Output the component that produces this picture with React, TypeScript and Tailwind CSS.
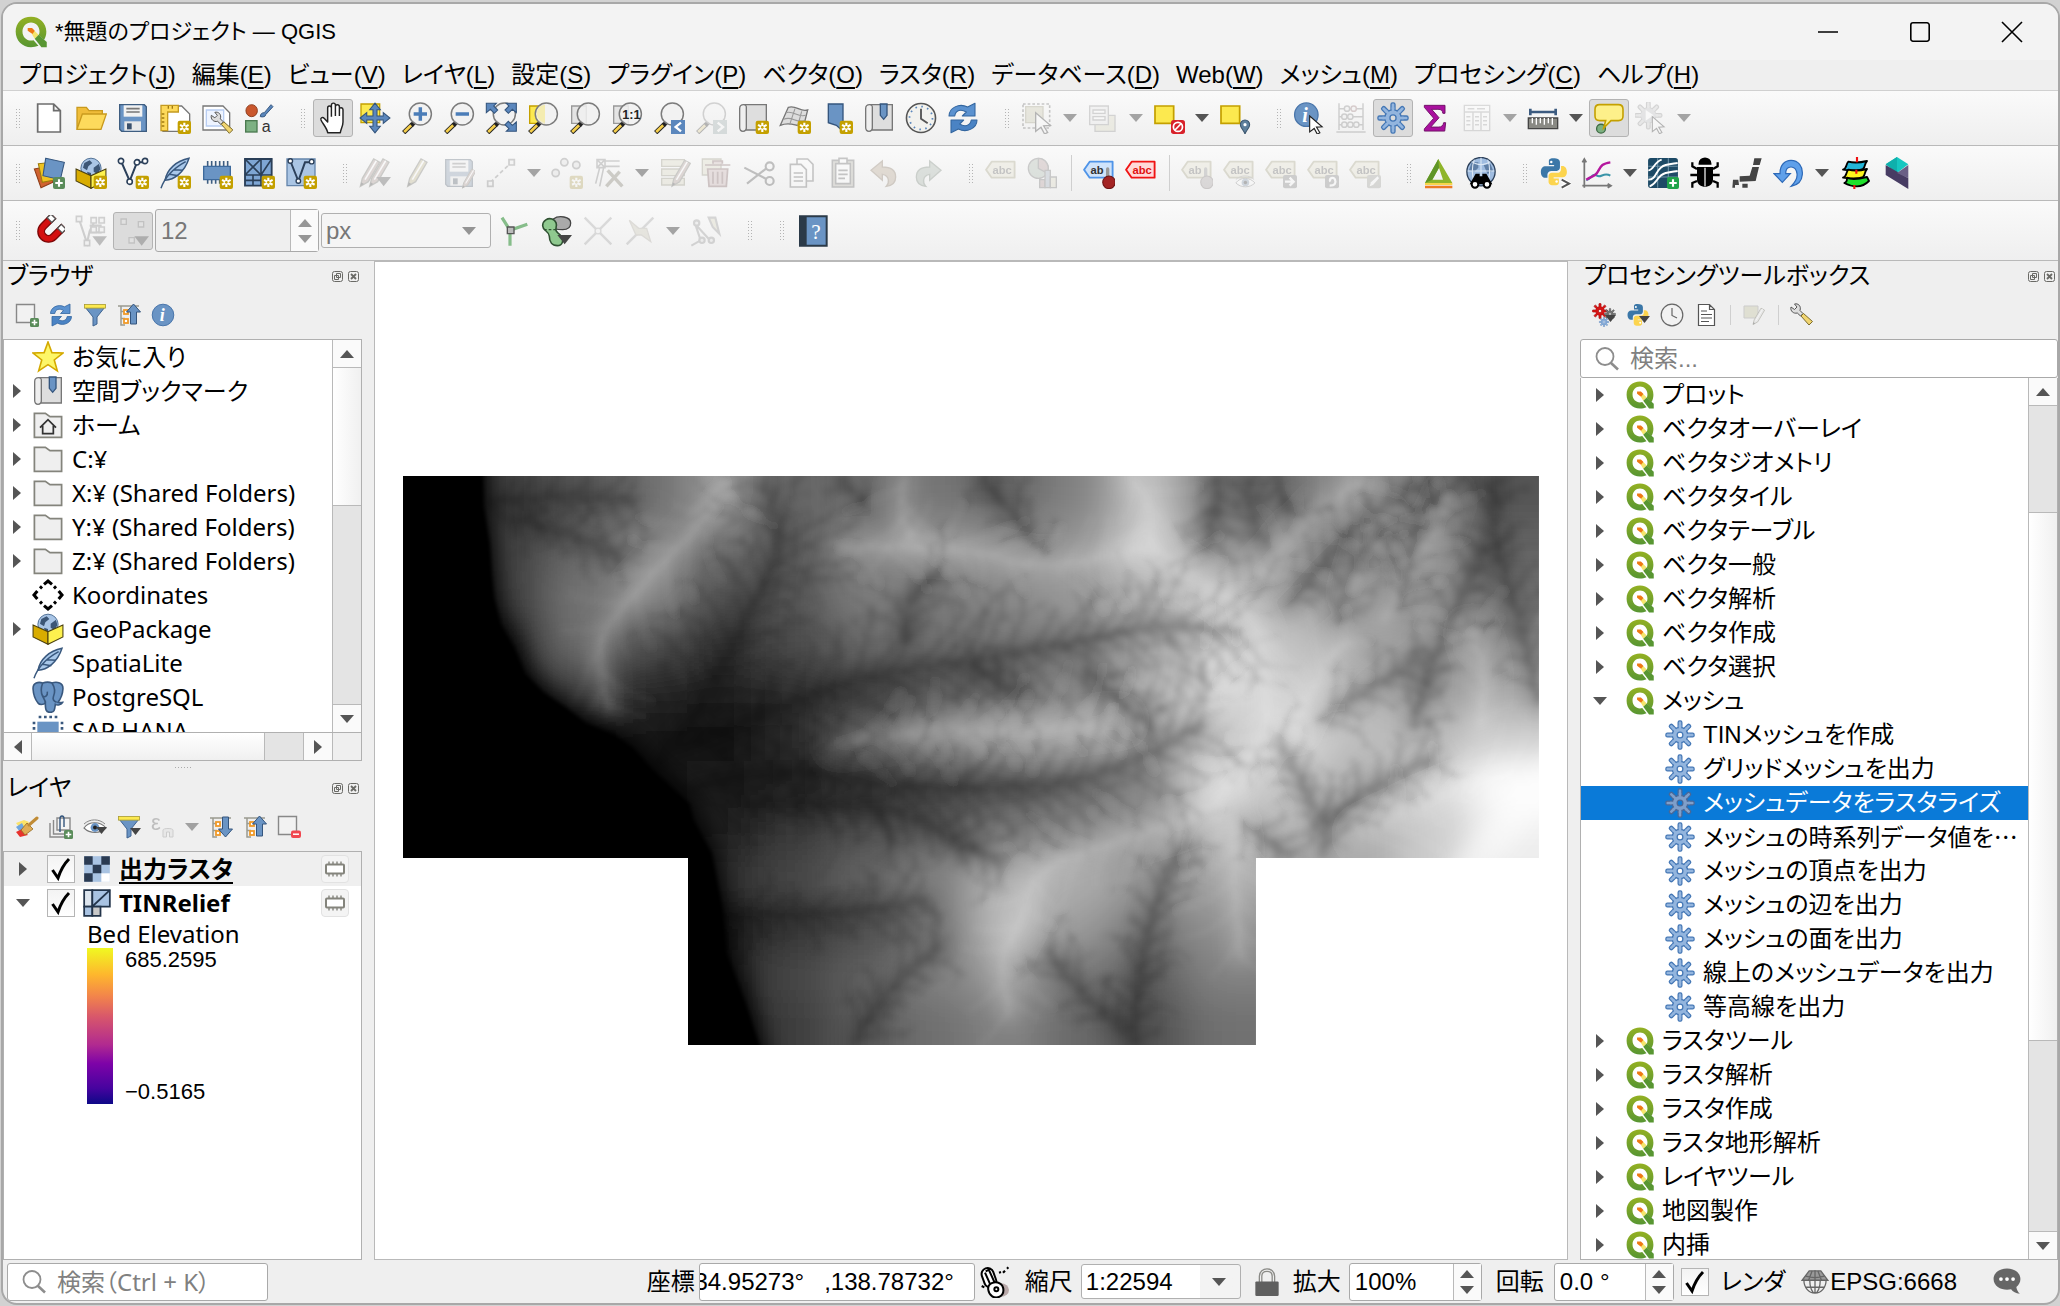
import React, { type ReactNode } from 'react';

const JP = "[font-family:'Liberation_Sans','Noto_Sans_CJK_JP',sans-serif]";
const TREE = "[font-family:'Noto_Sans','Noto_Sans_CJK_JP',sans-serif]";

/* ---------- icon building blocks ---------- */

const Star = () => (
  <g>
    <rect x="14" y="14" width="10" height="10" rx="1.5" fill="#c4a000" />
    <path d="M19 15.5v7M15.8 17.2l6.4 3.6M15.8 20.8l6.4-3.6" stroke="#fff" strokeWidth="1.6" />
    <circle cx="19" cy="19" r="1" fill="#c4a000" />
  </g>
);
const Plus = ({ fill = '#5a8c5a' }: { fill?: string }) => (
  <g>
    <rect x="15" y="15" width="9" height="9" rx="1.5" fill={fill} />
    <path d="M19.5 16.7v5.6M16.7 19.5h5.6" stroke="#fff" strokeWidth="1.6" />
  </g>
);
const Lens = ({ children }: { children?: ReactNode }) => (
  <g>
    <path d="M10.3 15l-2.6 2.6" stroke="#222" strokeWidth="3" />
    <path d="M8.8 16.4L2 23" stroke="#222" strokeWidth="3.4" />
    <path d="M7.6 17.4L2.4 22.5" stroke="#f6cf4c" strokeWidth="2" />
    <circle cx="14.5" cy="9" r="8.3" fill="#f1f1f1" fillOpacity=".85" stroke="#7c7c7c" strokeWidth="1.1" />
    {children}
  </g>
);
const Gear = ({ cx = 12, cy = 12, s = 1, fill = '#93b5de', stroke = '#4477b5', hole = '#fff' }) => (
  <g transform={`translate(${cx} ${cy}) scale(${s})`}>
    {[0, 45, 90, 135, 180, 225, 270, 315].map((a) => (
      <rect key={a} x="-1.5" y="-11.3" width="3" height="6" rx="1.2" fill={fill} stroke={stroke} strokeWidth="1" transform={`rotate(${a})`} />
    ))}
    <circle r="6.2" fill={fill} stroke={stroke} strokeWidth="1" />
    {[0, 45, 90, 135, 180, 225, 270, 315].map((a) => (
      <rect key={a} x="-1" y="-8" width="2" height="3" fill={fill} transform={`rotate(${a})`} />
    ))}
    <circle r="2.3" fill={hole} stroke={stroke} strokeWidth="1" />
  </g>
);
const Pencil = ({ x = 0, y = 0, s = 1, fill = '#c9b458' }) => (
  <g transform={`translate(${x} ${y}) scale(${s})`}>
    <path d="M5 22l1.5-6L15 1.5l4.5 2.5L11 18.5z" fill={fill} stroke="#6b6b5a" strokeWidth="1" />
    <path d="M5 22l.7-3 2 1.2z" fill="#333" />
    <path d="M8.5 17L17 2.8" stroke="#fff" strokeWidth="1.2" />
  </g>
);
const Tag = ({ fill = '#e6e0b4', stroke = '#a39b5a', color = '#555', text = 'abc' }) => (
  <g>
    <path d="M.8 9.5L5 3.5h17.2v12H5z" fill={fill} stroke={stroke} strokeWidth="1.4" strokeLinejoin="round" />
    <text x="5.6" y="12.6" fontSize="8.4" fontWeight="700" fill={color} fontFamily="Liberation Sans">
      {text}
    </text>
  </g>
);
const Scroll = () => (
  <g stroke="#777" strokeWidth="1">
    <path d="M5 2h17v19H7z" fill="#dedede" />
    <path d="M5 2c-2.5 0-3 1-3 3v14c0 2 1 3 2.500 3 2 0 2.500-1 2.500-3V4c0-1.300-.7-2-2-2z" fill="#efefef" />
  </g>
);
const Globe = ({ cy = 9 }) => (
  <g>
    <circle cx="12" cy={cy} r="7.6" fill="#a9c5e6" stroke="#4a6a90" strokeWidth=".7" />
    <path d="M7 4.500l4-2 2 2-3 2.500-1 3-3-2zM14 8l4-3 1 4-2 4-3-2zM9 11l3 1v3l-2-1z" fill="#3c5676" />
  </g>
);
const Refresh = () => (
  <g stroke="#33669f" strokeWidth=".8" strokeLinejoin="round">
    <path d="M1.500 10.500C1.500 4.500 9 .5 15.500 3.800L21 1v9.500h-9.500l3-3C10.500 5.200 6.500 6 5.800 10.500z" fill="#5b92d0" />
    <path d="M22.500 13.500c0 6-7.500 10-14 6.700L3 23v-9.500h9.500l-3 3c3.500 2.300 8 1.500 8.700-3z" fill="#4a83c4" />
  </g>
);
const Disk = () => (
  <g>
    <path d="M2 2h18.500L22 3.500V22H3.500L2 20.500z" fill="#6a94c4" stroke="#3e5d80" />
    <rect x="5" y="2.500" width="14" height="8.500" fill="#f2f2f2" />
    <path d="M7 5h10M7 7.500h10" stroke="#777" strokeWidth="1.200" />
    <rect x="5.500" y="14.500" width="12.500" height="7" fill="#e9e9e9" />
    <rect x="7.500" y="16" width="3.500" height="4.500" fill="#39506c" />
  </g>
);
const Python = () => (
  <g>
    <path d="M11.500 1C7.500 1 8 2.800 8 4.500v2h4.200v.9H5.500C3 7.400 1.500 9 1.500 12s1.600 4.800 3.500 4.800h1.800v-2.600c0-1.800 1.500-3 3.200-3h4.300c1.500 0 2.600-1.200 2.600-2.700V4.300C16.900 2 15 1 11.500 1z" fill="#3b77a8" />
    <path d="M12.500 22.800c4 0 3.500-1.800 3.500-3.500v-2h-4.200v-.9h6.700c2.500 0 4-1.600 4-4.400 0-3-1.600-4.800-3.500-4.800h-1.200v2.600c0 1.800-1.500 3-3.200 3h-4.300c-1.500 0-2.600 1.200-2.600 2.700v4.200c0 2.300 1.600 3.100 4.800 3.100z" fill="#fcd44e" />
    <circle cx="9.900" cy="4" r="1" fill="#fff" />
    <circle cx="14.200" cy="19.800" r="1" fill="#fff" />
  </g>
);
const TreeLines = () => (
  <g>
    <path d="M1 3h21M4 3v19h4M4 8.500h4M4 15.500h4" stroke="#9b9b90" strokeWidth="1.500" fill="none" />
    <rect x="7" y="7" width="4" height="4" fill="#fff" stroke="#f09a28" strokeWidth="1.800" />
    <rect x="7" y="16" width="4" height="4" fill="#fff" stroke="#f09a28" strokeWidth="1.800" />
  </g>
);
const Funnel = () => (
  <g>
    <path d="M2 4h20l-8 10v7l-4 2v-9z" fill="#6a94c4" stroke="#3e6390" />
    <rect x="1.500" y="1.500" width="21" height="3.600" fill="#fce94f" stroke="#a89a30" strokeWidth=".8" />
  </g>
);
const Feather = () => (
  <g>
    <path d="M22.500 1C13 3 6 9 4.500 17.500 11 17 19 12 22.500 1z" fill="#a9c8ea" stroke="#39587e" strokeWidth="1.100" />
    <path d="M1.500 23.500C4 16 10 9 20 3.500M8 13l6.500 1M11 9.500l7 .5" stroke="#39587e" strokeWidth="1.100" fill="none" />
  </g>
);
const Down = ({ x = 14, y = 15 }) => <path d={`M${x} ${y}h11l-5.500 7z`} fill="#444" />;
const Mesh = () => (
  <g>
    <path d="M1.500 1.500h20v20h-20z" fill="#7ea6d4" stroke="#2a3f58" strokeWidth="1.400" />
    <path d="M1.500 13.500h20M1.500 17.500h12M7.500 13.500v8M13.500 1.500v20M1.500 1.500l12 12M13.500 1.500l-12 12M21.500 1.500l-8 12" stroke="#2a3f58" strokeWidth="1.200" />
  </g>
);
const Box = () => (
  <g>
    <Globe cy={8.500} />
    <path d="M.8 9L12 14v9.500L.8 18z" fill="#d8ac00" stroke="#4d4210" strokeWidth=".8" />
    <path d="M23.200 9L12 14v9.500L23.200 18z" fill="#fdf14e" stroke="#4d4210" strokeWidth=".8" />
  </g>
);
const Eye = () => (
  <g>
    <path d="M1 13c5-7 16-7 22 0-6 6-16 6-22 0z" fill="#fff" stroke="#777" strokeWidth="1.100" />
    <path d="M1 9c6-5.500 15-5.500 21 0" stroke="#888" fill="none" />
    <circle cx="12" cy="12.500" r="4.400" fill="#6a94c4" />
    <circle cx="12" cy="12.500" r="2" fill="#222" />
  </g>
);
const Wrench = () => (
  <g>
    <path d="M1 4l3.500 2.500L7 4 4.500 1C8 0 11.500 3 10 7.500l3 3-2.500 2.500-3.200-3C3.500 11 0 8 1 4z" fill="#ddd" stroke="#555" strokeWidth="1" />
    <path d="M13.500 10.500l9 8-3.500 3.500-8-9z" fill="#f1d570" stroke="#7b6b2c" strokeWidth="1" />
  </g>
);
const Cursor = ({ x = 10, y = 9, s = 1 }) => (
  <path transform={`translate(${x} ${y}) scale(${s})`} d="M0 0l11 9.500-5 .3 3 5-2.300 1.200-2.700-5L0 14z" fill="#fff" stroke="#222" strokeWidth="1" />
);
const Nodes = () => (
  <g fill="#eee" stroke="#777" strokeWidth="1.200">
    <path d="M3 3l6 18 2-9 4-8M11 8h9M11 13h9" fill="none" strokeWidth="1.600" />
    <path d="M1 1h4v4H1zM12 2h4v4h-4zM18 2h4v4h-4zM18 9h4v4h-4zM12 9h4v4h-4zM7 19h4v4H7z" />
  </g>
);

const ICONS: Record<string, ReactNode> = {
  new: <path d="M3.500 1.500h12l5 5v16h-17zM15.500 1.500v5h5" fill="#fff" stroke="#6d6d6d" strokeWidth="1.300" />,
  open: (
    <g stroke="#c99a1e" strokeWidth="1">
      <path d="M1.500 20V4h7l2 2.500h10V10H6z" fill="#f0bd3a" />
      <path d="M1.500 20.500L5.500 9h18l-4 11.500z" fill="#fdda5c" />
    </g>
  ),
  save: <Disk />,
  layout: (
    <g>
      <path d="M3 3h14l6 6v13H3z" fill="#fff" stroke="#777" />
      <path d="M1.500 2.500h13v5h-8v14h-5z" fill="#fdd95a" stroke="#c49a20" />
      <path d="M2 9h2M2 12h2M2 15h2M2 18h2M7 3v2M10 3v2" stroke="#a07a10" />
      <Star />
    </g>
  ),
  layoutmgr: (
    <g>
      <path d="M1.500 3h15l5 5v13h-20z" fill="#fff" stroke="#777" />
      <path d="M4 6h13v12H4z" fill="#eef4ff" stroke="#b8cdf2" />
      <g transform="translate(7 7) scale(.75)">
        <Wrench />
      </g>
    </g>
  ),
  style: (
    <g>
      <ellipse cx="6.500" cy="6.500" rx="4.300" ry="4.500" fill="#c9572d" stroke="#8b3b1b" strokeWidth=".7" />
      <path d="M13 11c0-2 1-3 3-3l5-6 1.500 1.500L17 9.500c0 1.500-2 2-4 1.500z" fill="#5a86bb" stroke="#34557d" strokeWidth=".7" />
      <rect x="2" y="14" width="8.500" height="8.500" fill="#7db183" stroke="#4b7a50" />
      <text x="14" y="22.500" fontSize="12" fill="#333" fontFamily="Liberation Sans">
        a
      </text>
    </g>
  ),
  hand: (
    <path d="M8 23c-.5-3.500-4-7-5-9.500-.6-1.800 1.300-2.500 2.500-1.200L8 15V4.500c0-2 2.600-2 2.800 0V2.500c0-2.200 3-2.200 3 0v1c0-2 2.900-2 3 0v2c.2-1.800 2.700-1.600 2.700.4V15c0 3-1.500 5-2 8zM10.800 4.500V11M13.800 3.500v7M16.800 5.500v5" fill="#fff" stroke="#222" strokeWidth="1.100" strokeLinejoin="round" />
  ),
  panto: (
    <g>
      <path d="M1.500 1.500h14v14h-14z" fill="#fce94f" stroke="#c4a000" />
      <path d="M12 .8l4 5h-2.500v4.700h4.700V8l5 4-5 4v-2.500h-4.700v4.700H16l-4 5-4-5h2.500v-4.700H5.800V16l-5-4 5-4v2.500h4.700V5.800H8z" fill="#5b87bd" stroke="#34557d" strokeWidth=".8" />
    </g>
  ),
  zin: (
    <Lens>
      <path d="M14.500 4v10M9.500 9h10" stroke="#4b7db8" strokeWidth="2.600" />
    </Lens>
  ),
  zout: (
    <Lens>
      <path d="M9.500 9h10" stroke="#4b7db8" strokeWidth="2.600" />
    </Lens>
  ),
  zfull: (
    <g>
      <Lens />
      <path d="M1 1h7.500L6.500 3l3 3L7 8.500 4 5.500 1 8zM23.500 1H16l2 2-3 3 2.500 2.500 3-3 3 2.500zM23.500 22H16l2-2-3-3 2.500-2.500 3 3 3-2.500z" fill="#5b87bd" stroke="#34557d" strokeWidth=".8" />
    </g>
  ),
  zsel: (
    <g>
      <path d="M2 3h11v13H2z" fill="#fce94f" stroke="#c4a000" />
      <Lens>
        <path d="M7.500 8.500c0-4 3-6 6-6.500v13.500c-3 0-6-3-6-7z" fill="#f4ecb0" />
      </Lens>
    </g>
  ),
  zlayer: (
    <g>
      <path d="M2 3h11v13H2z" fill="#e4e4e4" stroke="#999" />
      <Lens />
    </g>
  ),
  znative: (
    <g>
      <path d="M2 3h11v13H2z" fill="#e4e4e4" stroke="#999" />
      <Lens>
        <text x="8.500" y="12.500" fontSize="9.500" fontWeight="700" fill="#222" fontFamily="Liberation Sans">
          1:1
        </text>
      </Lens>
    </g>
  ),
  zlast: (
    <g>
      <Lens />
      <path d="M13.500 13.500H24V24H13.500z" fill="#5b87bd" />
      <path d="M21 15.500l-4 3.200 4 3.300" stroke="#fff" strokeWidth="1.800" fill="none" />
    </g>
  ),
  znext: (
    <g>
      <Lens />
      <path d="M13.500 13.500H24V24H13.500z" fill="#8aa" />
      <path d="M17 15.500l4 3.200-4 3.300" stroke="#fff" strokeWidth="1.800" fill="none" />
    </g>
  ),
  newmap: (
    <g>
      <Scroll />
      <Star />
    </g>
  ),
  new3d: (
    <g>
      <path d="M7 4c6-2 9 4 14.500 2l-3 12c-6 1-9-4-17.500-.5z" fill="#ddd" stroke="#777" />
      <path d="M5 8c6-2 9 4 15 2M3.500 13c6-3 9 3 15.500 1M12 5L8 17M17 7l-3 11" stroke="#999" fill="none" strokeWidth=".8" />
      <Star />
    </g>
  ),
  newbm: (
    <g>
      <path d="M5.500 1.500h11V22l-5-4.500-6-2z" fill="#6a94c4" stroke="#34557d" />
      <Star />
    </g>
  ),
  bm: (
    <g>
      <Scroll />
      <path d="M13 1.500h5V10l-2.500 3L13 10z" fill="#6a94c4" stroke="#34557d" />
    </g>
  ),
  clock: (
    <g>
      <circle cx="12" cy="12" r="10.900" fill="#f2f2ee" stroke="#555" strokeWidth="1.200" />
      <circle cx="12" cy="12" r="8.600" fill="none" stroke="#5b87bd" strokeWidth="1.300" strokeDasharray="1.200 3.300" />
      <path d="M12 5v7.500l5 3.500" stroke="#555" strokeWidth="1.400" fill="none" />
    </g>
  ),
  clock2: (
    <g>
      <circle cx="12" cy="12" r="10.800" fill="#f2f2f2" stroke="#666" strokeWidth="1.200" />
      <path d="M12 5v7.500l5 2.500" stroke="#666" strokeWidth="1.200" fill="none" />
    </g>
  ),
  refresh: <Refresh />,
  select: (
    <g>
      <path d="M1.500 1.500h20v18h-20z" fill="none" stroke="#555" strokeWidth="1.200" strokeDasharray="2 1.500" />
      <path d="M3.500 3.500h13v12h-13z" fill="#c9c48c" stroke="#99935a" />
      <Cursor x={11} y={8} />
    </g>
  ),
  form: (
    <g stroke="#888">
      <path d="M6 10h15v12H6z" fill="#dcd7a6" />
      <path d="M2 3h14v14H2z" fill="#e8e8e8" />
      <path d="M4.500 6h9v2.500h-9zM4.500 11h9v2.500h-9z" fill="#fff" />
    </g>
  ),
  desel: (
    <g>
      <path d="M1.500 3h14v13h-14z" fill="#fce94f" stroke="#c4a000" strokeWidth="1.300" />
      <rect x="13.500" y="13.500" width="10.500" height="10.500" rx="2" fill="#d8212a" />
      <circle cx="18.700" cy="18.700" r="3.400" fill="none" stroke="#fff" strokeWidth="1.300" />
      <path d="M16.500 21l4.500-4.700" stroke="#fff" strokeWidth="1.300" />
    </g>
  ),
  selloc: (
    <g>
      <path d="M1.500 3h14v13h-14z" fill="#fce94f" stroke="#c4a000" strokeWidth="1.300" />
      <path d="M19.500 24c-1-3-3.500-4.500-3.500-7a3.500 3.500 0 0 1 7 0c0 2.500-2.500 4-3.500 7z" fill="#5d7f9c" stroke="#3c566e" strokeWidth=".8" />
      <circle cx="19.500" cy="17" r="1.200" fill="#fff" />
    </g>
  ),
  identify: (
    <g>
      <circle cx="10" cy="9.500" r="8.800" fill="#6a94c4" stroke="#4a76ab" />
      <text x="7" y="15" fontSize="15" fontStyle="italic" fontWeight="700" fill="#fff" fontFamily="Liberation Serif">
        i
      </text>
      <Cursor x={12.500} y={10.500} s={0.85} />
    </g>
  ),
  abacus: (
    <g stroke="#777" strokeWidth="1.100" fill="#eee">
      <path d="M3 1v20M21 1v20M1 22.500h22M3 5h18M3 11h18M3 17h18" />
      <circle cx="9" cy="5" r="2" />
      <circle cx="14" cy="5" r="2" stroke="#a66" />
      <circle cx="7" cy="11" r="2" />
      <circle cx="11.500" cy="11" r="2" />
      <circle cx="7" cy="17" r="2" />
      <circle cx="11.500" cy="17" r="2" />
      <circle cx="16" cy="17" r="2" />
    </g>
  ),
  gear: <Gear hole="#dcdcdc" />,
  gearw: <Gear />,
  gearsel: <Gear fill="#7f9fca" stroke="#4a6796" hole="#0a7ad8" />,
  sigma: <path d="M4 2.500h15.500v6h-1.600c-.4-2.300-1.200-3-3.700-3H9.500l5.500 6.300-6.200 7h5.700c2.500 0 3.500-1 4-3.300h1.500l-.7 6.300H4v-1.600l7-8L4 4z" fill="#a9109e" stroke="#6d1064" strokeWidth=".7" />,
  table: (
    <g stroke="#999">
      <path d="M2.500 2.500h19v19h-19z" fill="#fff" />
      <path d="M2.500 7.500h19M9 7.500v14M15 7.500v14M4 11h3M4 14h3M4 17h3M10.500 11h3M10.500 14h3M10.500 17h3M16.500 11h3M16.500 14h3M16.500 17h3M5 5h5M12 5h6" strokeWidth="1.100" />
    </g>
  ),
  ruler: (
    <g>
      <path d="M2.500 7.500h19M2.500 5v5M21.500 5v5" stroke="#3c5b80" strokeWidth="2" />
      <path d="M1 12h22v8H1z" fill="#8a8a84" stroke="#444" />
      <path d="M4 12v4M7 12v5M10 12v4M13 12v5M16 12v4M19 12v5" stroke="#fff" />
    </g>
  ),
  tip: (
    <g>
      <circle cx="6" cy="20" r="3.300" fill="#7db183" stroke="#3f6b44" />
      <path d="M5 2h14c2.500 0 3.500 1.500 3.500 3.500v5c0 2-1 3.500-3.500 3.500h-5.500L8 19.500l1.500-5.500H5c-2.500 0-3.500-1.500-3.500-3.500v-5C1.500 3.500 2.500 2 5 2z" fill="#fdf08a" stroke="#c4a000" strokeWidth="1.200" />
    </g>
  ),
  run: (
    <g>
      <Gear cx={10} cy={10} s={0.9} fill="#ccc" stroke="#888" />
      <circle cx="10" cy="10" r="5.500" fill="#b9bdc4" />
      <path d="M8 6l6 4-6 4z" fill="#fff" />
      <Cursor x={13} y={11} s={0.8} />
    </g>
  ),
  /* data source and layer tools */
  ds: (
    <g>
      <path d="M1 9l10-2 4 12-9 4z" fill="#d0622f" stroke="#8d3d18" strokeWidth=".8" />
      <path d="M4 5l11-1 2 13-10 2z" fill="#efc321" stroke="#9b7b0c" strokeWidth=".8" />
      <path d="M9.500 1l14 3-3 13-13-3z" fill="#6a94c4" stroke="#34557d" strokeWidth=".8" />
      <Plus />
    </g>
  ),
  gpkg: (
    <g>
      <Box />
      <Star />
    </g>
  ),
  gpkg0: <Box />,
  shp: (
    <g>
      <path d="M3 3l6.500 15L15 4h6" stroke="#2c405a" strokeWidth="1.500" fill="none" />
      <g fill="#fff" stroke="#2c405a" strokeWidth="1.200">
        <circle cx="3" cy="3" r="2" />
        <circle cx="9.500" cy="18.500" r="2" />
        <circle cx="15" cy="4" r="2" />
        <circle cx="21" cy="3" r="2" />
      </g>
      <Star />
    </g>
  ),
  feather: (
    <g>
      <Feather />
      <Star />
    </g>
  ),
  feather0: <Feather />,
  temp: (
    <g>
      <path d="M5 3v17M8 3v17M11 3v17M14 3v17M17 3v12M20 3v12" stroke="#3e5d80" strokeWidth="1.200" />
      <path d="M2 7h20v10H2z" fill="#6a94c4" stroke="#3e6a9c" />
      <Star />
    </g>
  ),
  mesh: (
    <g>
      <Mesh />
      <Star />
    </g>
  ),
  gps: (
    <g>
      <path d="M1.500 1.500h21v20h-21z" fill="#aac5e4" stroke="#6485ab" />
      <path d="M4 3l6 15 5-14h5" stroke="#2c405a" strokeWidth="1.500" fill="none" />
      <g fill="#fff" stroke="#2c405a">
        <circle cx="4" cy="3" r="1.700" />
        <circle cx="10" cy="18" r="1.700" />
        <circle cx="20" cy="3.500" r="1.700" />
      </g>
      <Star />
    </g>
  ),
  pencils: (
    <g>
      <Pencil x={-4} fill="#b98d80" />
      <Pencil x={3} fill="#b98d80" />
      <Down x={13} y={15} />
    </g>
  ),
  pencil: <Pencil />,
  saveed: (
    <g>
      <Disk />
      <Pencil x={11} y={8} s={0.7} fill="#b98d80" />
    </g>
  ),
  line: (
    <g stroke="#777" fill="#eee" strokeWidth="1.300">
      <path d="M4 19L20 4" strokeDasharray="3 2" />
      <path d="M2 18h4v4H2zM18 2h4v4h-4z" />
    </g>
  ),
  pts: (
    <g>
      <g fill="#ddd" stroke="#777" strokeWidth="1.300">
        <circle cx="10" cy="4" r="2.700" />
        <circle cx="3.500" cy="12" r="2.700" />
        <circle cx="19" cy="6" r="2.700" />
      </g>
      <Star />
    </g>
  ),
  vertex: (
    <g>
      <path d="M3 2h6v6H3zM3 2l6 6M9 2L3 8M9 3h11M9 7h11M5 8L2 20M8 8L5 22" stroke="#777" strokeWidth="1.200" fill="none" />
      <path d="M10 22l10-11M11 10l11 12" stroke="#776f50" strokeWidth="2.600" />
    </g>
  ),
  modify: (
    <g>
      <path d="M2 2h17v5H2zM2 9h17v5H2zM2 16h17v5H2z" fill="#ddd8a8" stroke="#908b60" />
      <Pencil x={5} y={1} s={0.95} fill="#b98d80" />
    </g>
  ),
  del: (
    <g>
      <path d="M1 1.500h14v12H1z" fill="#ddd8a8" stroke="#908b60" />
      <path d="M3 6h19M9 5V3h7v2M5 9h15l-1 13H6zM9 11v9M12.500 11v9M16 11v9" fill="#d9a5a5" stroke="#905050" strokeWidth="1.300" />
    </g>
  ),
  cut: (
    <g fill="none" stroke="#444" strokeWidth="1.600">
      <circle cx="20" cy="7" r="3" />
      <circle cx="20" cy="18" r="3" />
      <path d="M17.500 8.500L3 20M17.500 16.500L1 8" />
    </g>
  ),
  copy: (
    <g fill="#fff" stroke="#555" strokeWidth="1.200">
      <path d="M9 1.500h8l4 4V18H9z" />
      <path d="M4 5.500h8l4 4V22.500H4zM6.500 12h7M6.500 15h7M6.500 18h7" />
    </g>
  ),
  paste: (
    <g fill="#fff" stroke="#555" strokeWidth="1.200">
      <path d="M4 2.500h16v20H4z" fill="#b5b09a" />
      <path d="M6.500 5h11v15h-11zM9 1h6v4H9zM8.500 10h7M8.500 13h7M8.500 16h5" />
    </g>
  ),
  undo: <path d="M1.500 10L10 3v4.500c7 0 10 3 10 7.500s-3 6.500-7 7c2-2 3-8-3-9v4.500z" fill="#c29b6b" stroke="#8d6a3f" />,
  redo: <path d="M22.500 10L14 3v4.500C7 7.500 4 10.500 4 15s3 6.500 7 7c-2-2-3-8 3-9v4.500z" fill="#97b39b" stroke="#627e66" />,
  tag: <Tag />,
  diagram: (
    <g stroke="#666">
      <circle cx="8.500" cy="8.500" r="7.500" fill="#9bb89e" />
      <path d="M8.500 8.500V1a7.500 7.500 0 0 1 6.500 11z" fill="#c58f8f" />
      <path d="M9.500 17h4v6h-4z" fill="#c58f8f" />
      <path d="M13.500 10h4v13h-4z" fill="#90abc9" />
      <path d="M17.500 15h4.500v8h-4.500z" fill="#ddd8a8" />
    </g>
  ),
  tagpin: (
    <g>
      <Tag fill="#cfe3fb" stroke="#4f94e8" color="#333" text="ab" />
      <path d="M18.500 9v9" stroke="#999" strokeWidth="2.500" strokeLinecap="round" />
      <circle cx="19.500" cy="19" r="4.700" fill="#a32424" stroke="#6d1414" strokeWidth=".8" />
    </g>
  ),
  tagred: <Tag fill="#ffd9d9" stroke="#f01414" color="#e01010" />,
  tagpin2: (
    <g>
      <Tag text="ab" />
      <path d="M18.500 9v9" stroke="#888" strokeWidth="2.500" strokeLinecap="round" />
      <circle cx="19.500" cy="19" r="4.700" fill="#a99" stroke="#766" strokeWidth=".8" />
    </g>
  ),
  tageye: (
    <g>
      <Tag />
      <g transform="translate(9 11) scale(.65)">
        <Eye />
      </g>
    </g>
  ),
  tagmove: (
    <g>
      <Tag />
      <rect x="13.500" y="13.500" width="10.500" height="10" rx="1.500" fill="#777" />
      <path d="M15 18.500h6M18.500 15.500l3 3-3 3" stroke="#fff" strokeWidth="1.700" fill="none" />
    </g>
  ),
  tagrot: (
    <g>
      <Tag />
      <rect x="13.500" y="13.500" width="10.500" height="10" rx="1.500" fill="#777" />
      <path d="M17 21.500c4 0 5-2 4-4.500s-5-1-3.500 1.500" stroke="#fff" strokeWidth="1.700" fill="none" />
    </g>
  ),
  tagedit: (
    <g>
      <Tag />
      <rect x="13.500" y="13.500" width="10.500" height="10" rx="1.500" fill="#998" />
      <path d="M15.500 22l1-3 5-4.500 1 1.500-4.500 5z" fill="#fff" />
    </g>
  ),
  delta: (
    <g>
      <path d="M11.500 1.500L22 19.500H1.500zM12 8L7 17h8z" fill="#8fb52a" fillRule="evenodd" />
      <path d="M1.500 19.500L11.500 1.500 12 8 7 17z" fill="#5f9527" />
      <path d="M1.500 19.500h20.500v1.500H1.500z" fill="#f7d54a" />
      <path d="M1.500 21.500h20.500v2H1.500z" fill="#ec7a24" />
    </g>
  ),
  metasearch: (
    <g>
      <circle cx="12" cy="11" r="10.600" fill="#9fbce0" stroke="#2c405a" />
      <path d="M5 4h5v4l-3 3-4-1zM14 6l5-1 2 5-4 3z" fill="#5f7fa6" />
      <path d="M12 .5v20M2 10.500h20M5 3.500c4 3 10 3 14 0M7 2c-2 5-2 12 0 17M17 2c2 5 2 12 0 17" stroke="#dce8f5" fill="none" strokeWidth=".8" />
      <path d="M8 12.500h3v2h2v-2h3l4.500 8h-17z" fill="#000" />
      <circle cx="7.500" cy="20.500" r="2.500" fill="#fff" stroke="#000" strokeWidth="1.500" />
      <circle cx="16.500" cy="20.500" r="2.500" fill="#fff" stroke="#000" strokeWidth="1.500" />
    </g>
  ),
  python: (
    <g>
      <g transform="scale(.93)">
        <Python />
      </g>
      <path d="M17 17l5 3-5 3" stroke="#fff" strokeWidth="3.500" fill="none" />
      <path d="M17 17l5.500 3-5.500 3" stroke="#555" strokeWidth="1.500" fill="none" />
    </g>
  ),
  pythond: (
    <g>
      <Python />
      <Down x={13} y={13} />
    </g>
  ),
  plot: (
    <g fill="none">
      <path d="M2.500 23V2M1 4l1.500-2.500L4 4M1 21.500h21M20 20l2.500 1.500L20 23" stroke="#777" strokeWidth="1.300" />
      <path d="M4 17c3 1 4-6 8-3 3 2 5-3 10 0" stroke="#3a94a8" strokeWidth="1.600" />
      <path d="M4 17c4-3 6-2 8-5 3-5 3-7 10-8" stroke="#b5179e" strokeWidth="1.800" />
    </g>
  ),
  mapadd: (
    <g>
      <rect x=".8" y=".8" width="22.400" height="22.400" rx="2" fill="#1d4a66" />
      <path d="M1 7h22M1 15h22M8 1v22M16 1v22" stroke="#6f93a8" strokeWidth=".8" />
      <path d="M1 10c4 0 4-6 10-8M1 17c7 0 5-9 13-11 4-1 6-1 9-1.500M2 22c6-2 5-8 12-10 4-1 6-1 9-1.500" stroke="#fff" strokeWidth="1.400" fill="none" />
      <Plus fill="#1fa34a" />
    </g>
  ),
  bug: (
    <g stroke="#000" strokeWidth="1.700" fill="none">
      <path d="M8 5c0-5 8-5 8 0z" fill="#000" />
      <path d="M6 7.500h12V17c0 7-12 7-12 0z" fill="#000" stroke="none" />
      <path d="M12 8v14" stroke="#fff" strokeWidth=".9" />
      <path d="M6 9L2.500 7V4M18 9l3.500-2V4M6 13.500H1M18 13.500h5M6 18l-3.500 1.500V23M18 18l3.500 1.500V23" />
    </g>
  ),
  seat: (
    <g fill="#444">
      <path d="M17.500 1h5.500l-1.500 5h-5zM16 7.500h5L18.500 18l-12 .5v-4l7.500-.5z" />
      <path d="M1.500 17h4l.5 4H3v2H1zM8.500 20h4v3h-4z" />
    </g>
  ),
  rotate: (
    <g>
      <path d="M.8 12.500h4.500C5 6 9 2.500 13.500 2.500 19 2.500 22.500 7 22 13c-.3 4.500-3 8-8.500 9 3-3 5-6 4.500-9.500-.4-3-2-5-4.500-5-2.600 0-4 2-4 5H13l-6 6.500z" fill="#5fa0ea" stroke="#2e6ab8" strokeWidth=".9" />
    </g>
  ),
  layers: (
    <g stroke="#000" strokeWidth="1.400" strokeLinejoin="round">
      <path d="M7 3.500c4 1 8 1 14-.5-2 2-1 4-3 6-5 2-9 1-15 .5 3-1 2-4 4-6z" fill="#24b5d8" />
      <path d="M7 9.500c4 1 8 1 14-.5-2 2-1 4-3 6-5 2-9 1-15 .5 3-1 2-4 4-6z" fill="#fdf61d" />
      <path d="M6 15.500c4 2 9 1 15-.500l1.500 3c-3 3-6 4-9 4-4 0-6-.5-9.500-2.500 2-1 2-2 2-4z" fill="#1fe02c" />
      <path d="M13.500 0v4M13 9.500v3M11.500 21v3" stroke="#e11" strokeWidth="1.600" />
    </g>
  ),
  cube: (
    <g>
      <path d="M12 0l8.500 5.500L12 12 3.500 5.500z" fill="#16c7c1" />
      <path d="M12 0v12L3.500 5.500z" fill="#0fb0ac" />
      <path d="M3.500 6L20.500 16v8L3.500 13.500z" fill="#473c63" />
      <path d="M20.500 6v10L12 12z" fill="#6a5f86" />
    </g>
  ),
  /* snapping */
  magnet: (
    <g transform="rotate(45 12 12)">
      <path d="M4 2v10.500a8 8 0 0 0 16 0V2h-5v10.500a3 3 0 0 1-6 0V2z" fill="#d40f0f" stroke="#7d0808" />
      <path d="M4 2h5v4H4zM15 2h5v4h-5z" fill="#fff" stroke="#555" />
    </g>
  ),
  snapv: (
    <g>
      <Nodes />
      <Down x={13} y={16} />
    </g>
  ),
  snapt: (
    <g>
      <path d="M3 3h4v4H3zM16 5h4v4h-4zM9 17h4v4H9z" fill="#eee" stroke="#888" />
      <Down x={13} y={16} />
    </g>
  ),
  topo: (
    <g>
      <path d="M3 2l6 9.500L22 7M9 11.500V23" stroke="#86bd8a" strokeWidth="2.400" fill="none" />
      <path d="M7 9h5v5H7z" fill="#bbb" stroke="#555" />
    </g>
  ),
  self: (
    <g>
      <path d="M10 3c4-3 13-2 13 3s-4 5-6 5-7 0-7-2z" fill="#aaa" stroke="#444" />
      <path d="M2 8c0-4 4-6 7-5s4 4 3 7 2 3 4 6 1 7-3 7-6-3-6-7-5-4-5-8z" fill="#8fc98f" stroke="#2f5132" strokeWidth="1.200" />
      <path d="M3 11h9" stroke="#2f5132" strokeDasharray="2 1.500" />
      <Down x={13} y={15} />
    </g>
  ),
  cross: (
    <g>
      <path d="M2 2l20 20M22 2L2 22" stroke="#999" strokeWidth="1.800" />
      <circle cx="12" cy="12" r="2.200" fill="#eee" stroke="#999" />
    </g>
  ),
  inter: (
    <g>
      <path d="M22 2L2 22" stroke="#999" strokeWidth="1.800" />
      <path d="M4 4l7 6h6l3 10-7-5H9z" fill="#c9c29a" stroke="#aaa089" />
    </g>
  ),
  trace: (
    <g stroke="#888" fill="none" strokeWidth="1.600">
      <path d="M1 23l7-4-4-12 11 12" />
      <circle cx="5" cy="6" r="2" fill="#ddd" />
      <circle cx="9" cy="19" r="2" fill="#ddd" />
      <circle cx="16" cy="19" r="2" fill="#ddd" />
      <path d="M14 2l5 0 3 12-5-5z" fill="#d8d29c" />
    </g>
  ),
  help: (
    <g>
      <path d="M3 1h20v22H3z" fill="#6a94c4" stroke="#2b3a48" strokeWidth="1.500" />
      <path d="M3 1h5v22H3z" fill="#2b3a48" />
      <text x="11.500" y="18" fontSize="16" fill="#fff" fontFamily="Liberation Serif">
        ?
      </text>
    </g>
  ),
  /* panels */
  addl: (
    <g>
      <path d="M1.500 1.500h18v18h-18z" fill="#f2f2f2" stroke="#888" strokeWidth="1.400" />
      <Plus />
    </g>
  ),
  dell: (
    <g>
      <path d="M1.500 1.500h18v18h-18z" fill="#f2f2f2" stroke="#888" strokeWidth="1.400" />
      <rect x="14" y="15.500" width="10" height="7.500" rx="2" fill="#f0474f" />
      <path d="M16 19.200h6" stroke="#fff" strokeWidth="1.500" />
    </g>
  ),
  funnel: <Funnel />,
  funneld: (
    <g>
      <Funnel />
      <Down x={13} y={13} />
    </g>
  ),
  treeup: (
    <g>
      <TreeLines />
      <path d="M16.500 1l7 8h-4v12h-6V9h-4z" fill="#6a94c4" stroke="#34557d" />
    </g>
  ),
  treedn: (
    <g>
      <TreeLines />
      <path d="M16.500 22l7-8h-4V2h-6v12h-4z" fill="#6a94c4" stroke="#34557d" />
    </g>
  ),
  info: (
    <g>
      <circle cx="12" cy="12" r="10.800" fill="#6a94c4" stroke="#4a76ab" />
      <text x="8.800" y="18" fontSize="18" fontStyle="italic" fontWeight="700" fill="#fff" fontFamily="Liberation Serif">
        i
      </text>
    </g>
  ),
  brush: (
    <g>
      <path d="M1 8l8-3 5 2-6 10z" fill="#fbe36a" />
      <path d="M1 12l6-4 4 8-6 1z" fill="#6fa6e0" />
      <path d="M1 17l6-3 6 6-8 2z" fill="#e8322c" />
      <path d="M6 15l6-7 6 6-8 6z" fill="#e0ad55" stroke="#94691f" strokeWidth=".8" />
      <path d="M14 10l8-7" stroke="#c08b35" strokeWidth="3" strokeLinecap="round" />
    </g>
  ),
  group: (
    <g>
      <path d="M1 8v14h14M4.500 5v14h14" stroke="#8a8a8a" strokeWidth="1.400" fill="none" />
      <path d="M8 3h13v12H8z" fill="#f2f2f2" stroke="#8a8a8a" strokeWidth="1.400" />
      <path d="M11 17V4c0-4 4-4 4 0v8" stroke="#34557d" strokeWidth="1.400" fill="none" />
      <Plus />
    </g>
  ),
  eyed: (
    <g>
      <Eye />
      <Down x={13} y={12} />
    </g>
  ),
  eps: (
    <g>
      <text x="0" y="15" fontSize="22" fill="#777" fontFamily="Liberation Sans">
        ε
      </text>
      <path d="M12 22v-7c0-2 10-2 10 0v7h-3.500v-5h-3v5z" fill="#ddd" stroke="#999" />
    </g>
  ),
  star: <path d="M12 .8l2.900 7.900 8.300.3-6.500 5.200 2.300 8.200-7-4.700-7 4.700 2.300-8.200L.8 9l8.300-.3z" fill="#fdf668" stroke="#d4a900" strokeWidth="1.200" />,
  folder: <path d="M1.800 3.300h8.200l3.500 2.500h8.700v15.500H1.800z" fill="#efefef" stroke="#84847c" strokeWidth="1.300" />,
  home: (
    <g>
      <path d="M1.800 3.300h8.200l3.500 2.500h8.700v15.500H1.800z" fill="#efefef" stroke="#84847c" strokeWidth="1.300" />
      <path d="M6 14l6-6 6 6M8 12.500V18.500h8v-6" fill="none" stroke="#333" strokeWidth="1.300" />
    </g>
  ),
  koord: <path d="M9 4l3-2.500L15 4M9 20l3 2.500 3-2.500M4 9l-2.500 3L4 15M20 9l2.500 3-2.500 3M7.500 5.500L6 7M16.500 5.500L18 7M7.500 18.500L6 17M16.500 18.500L18 17" fill="none" stroke="#000" strokeWidth="2.300" />,
  postgres: (
    <g fill="#6a94c4" stroke="#39587e" strokeWidth="1.200">
      <path d="M.8 6C.5 1 5 .5 8 1.500c3-1 5-.8 7 0 4-1.300 8.500 0 8.200 4.500-.2 4-2.200 8-3.700 10 1 .5 3 0 3.500 0-1 2-4 2.500-5.500 1.500-.5 4-.5 6-4 6-3 0-3.500-2-3.500-7-1.500 1.500-4.500 1.500-5.500 0C2.500 14 1 10 .8 6z" />
      <path d="M8 1.500c-1.500 4-1 8 0 10s2 3 2 5M15 1.500c2 3 2.500 7 1 10.500-.5 1.500 0 3 2.500 4M8 11c1.500 2 4 0 3.500-3" fill="none" />
    </g>
  ),
  hana: (
    <g>
      <path d="M4 5h16v16H4z" fill="#6a94c4" />
      <path d="M5 1.500h14" stroke="#39587e" strokeWidth="2" strokeDasharray="2 2" />
      <path d="M1.500 5v14M22.500 5v14" stroke="#39587e" strokeWidth="2" strokeDasharray="2 2" />
    </g>
  ),
  raster: (
    <g>
      <path d="M1 1h22v22H1z" fill="#a9c3e2" />
      <path d="M1 1h7.300v7.300H1zM15.700 1H23v7.300h-7.300zM8.300 8.300h7.400v7.400H8.300zM1 15.700h7.300V23H1z" fill="#2b3b52" />
      <path d="M15.700 15.700H23V23h-7.300z" fill="#fff" />
    </g>
  ),
  meshl: (
    <g stroke="#23344a" strokeWidth="1.500">
      <path d="M1 1h7v14H1z" fill="#dde5ee" />
      <path d="M8 1h15v14H8z" fill="#a9c3e2" />
      <path d="M1 15h7v8H1z" fill="#a9c3e2" />
      <path d="M8 15h7v8H8z" fill="#c9c9c9" />
      <path d="M8 15L23 1" />
    </g>
  ),
  chip: (
    <g stroke="#84847c" strokeWidth="1.400">
      <path d="M6 4.500v15M10 4.500v15M14 4.500v15M18 4.500v15" />
      <rect x="3" y="7.500" width="18" height="9" rx="1" fill="#fff" strokeWidth="2" />
    </g>
  ),
  gears: (
    <g>
      <Gear cx={8} cy={8} s={0.68} fill="#d81414" stroke="#a80c0c" />
      <Gear cx={18} cy={11} s={0.5} fill="#777" stroke="#555" />
      <Gear cx={12} cy={19} s={0.42} />
      <Down x={13} y={12} />
    </g>
  ),
  doc: <path d="M4.500 1.500h11l5 5v16h-16zM15.500 1.500v5h5M7 8h6M7 11.500h11M7 15h11M7 18.500h8" fill="#fff" stroke="#555" strokeWidth="1.200" />,
  editp: (
    <g>
      <path d="M2 3h14v12H2z" fill="#c9c9a8" stroke="#999" />
      <Pencil x={7} y={4} s={0.8} fill="#ddd" />
    </g>
  ),
  wrench: <Wrench />,
  search: (
    <g fill="none" stroke="#8d8d8d" strokeWidth="1.800">
      <circle cx="10" cy="9.500" r="8.500" />
      <path d="M15.500 15.500l7.500 7" strokeWidth="2.600" />
    </g>
  ),
  lock: (
    <g>
      <path d="M6.500 12V7c0-7 11-7 11 0v5" fill="none" stroke="#8a8a86" strokeWidth="3.200" />
      <path d="M6.500 12V7c0-7 11-7 11 0v5" fill="none" stroke="#efefef" strokeWidth="1" />
      <rect x="2" y="11.500" width="20" height="12.500" rx="1" fill="#5f5f5f" />
    </g>
  ),
  globe: (
    <g fill="none" stroke="#666" strokeWidth="1.100">
      <path d="M1 10.500L7 2.500h10l6 8z" fill="#999" />
      <path d="M2.500 10.500c0 6 4 11 9.500 11s9.500-5 9.500-11M7.500 10.500c0 6 2 11 4.500 11s4.500-5 4.500-11M12 2v19.500M4 16.500h16M4 7c5 1.500 11 1.500 16 0M9.500 2.500l-3 8M14.500 2.500l3 8" />
    </g>
  ),
  bubble: (
    <g>
      <path d="M12 .5c6.500 0 11.500 3.600 11.500 9 0 2.900-1.500 5.300-3.500 6.800.3 2.200 1.500 4.700 3 5.700-3.500 0-6-1.700-7.500-3.700C9 20 .5 16.500.5 9.500c0-5.400 5-9 11.500-9z" fill="#666" />
      <circle cx="6.800" cy="9.500" r="1.600" fill="#fff" />
      <circle cx="12" cy="9.500" r="1.600" fill="#fff" />
      <circle cx="17.200" cy="9.500" r="1.600" fill="#fff" />
    </g>
  ),
  extent: (
    <g stroke="#000" strokeWidth="1.500">
      <ellipse cx="16.500" cy="18" rx="6" ry="5" fill="#b9a9a9" stroke="none" />
      <rect x="3" y="1.500" width="9" height="15" rx="4.500" fill="#fff" transform="rotate(-20 7 9)" />
      <path d="M4.500 5l4 9M7 2l5 11M5 4l4-2" />
      <path d="M7 18c-1-5 5-7 8.500-5s4 8 0 10-8-1-8.500-5z" fill="#fff" />
      <circle cx="13" cy="17.500" r="1.500" />
      <path d="M15 5l1.500-.5M18 5l1.500-1.500M21 2l1-1M2 15l2 1" strokeWidth="1.600" />
    </g>
  ),
};

const Icon = ({ name, className = 'size-8' }: { name: string; className?: string }) => (
  <svg viewBox="0 0 24 24" className={`shrink-0 ${className}`} fill="none" aria-hidden="true">
    {ICONS[name]}
  </svg>
);

const QLogo = ({ className }: { className: string }) => (
  <svg viewBox="0 0 24 24" className={`shrink-0 ${className}`} aria-hidden="true">
    <defs>
      <linearGradient id="qg" x1="0" y1="0" x2="0" y2="1">
        <stop offset="0" stopColor="#93b023" />
        <stop offset="1" stopColor="#589632" />
      </linearGradient>
    </defs>
    <path fillRule="evenodd" d="M12 .5C18.500.500 23.500 5.200 23.500 11.700c0 2.500-.6 4.500-1.700 6.200l-4-3.600c.4-.8.600-1.700.600-2.700 0-3.900-2.800-6.800-6.400-6.800s-6.400 2.900-6.400 6.800 2.800 6.800 6.400 6.800c.7 0 1.300-.1 1.900-.3l3.700 4.300c-1.700.7-3.600 1.100-5.600 1.100C5.400 23.500.500 18.400.500 11.700S5.400.5 12 .5z" fill="url(#qg)" />
    <path d="M9.500 9h3.300l2 2v3.300l-2.500-1.300-2.800-2z" fill="#ee7913" />
    <path d="M12.800 13.800l2-2.600 3 3-3 2.800z" fill="#f5e56c" />
    <path d="M14.800 17l3-2.900 6 5.400V23.500h-4z" fill="#589632" />
  </svg>
);

/* ---------- small controls ---------- */

const Tri = ({ dir = 'down', className = '' }: { dir?: 'up' | 'down' | 'left' | 'right'; className?: string }) => {
  const d = { down: 'M0 3h14L7 11z', up: 'M0 11h14L7 3z', left: 'M11 0v14L3 7z', right: 'M3 0v14l8-7z' }[dir];
  return (
    <svg viewBox="0 0 14 14" className={`size-[14px] shrink-0 fill-[#555] ${className}`} aria-hidden="true">
      <path d={d} />
    </svg>
  );
};

const Handle = ({ first = false }: { first?: boolean }) => (
  <span className={`flex h-8 shrink-0 items-center ${first ? 'w-[25px] pl-3' : 'w-8 pl-5'}`}>
    <span className="h-[21px] w-[6px] bg-[radial-gradient(circle,#b4b4b4_0.8px,transparent_1px)] bg-[length:3px_3px]" />
  </span>
);
const Sep = () => (
  <span className="flex w-[14px] shrink-0 justify-center">
    <span className="h-9 w-px bg-[#cfcfcf]" />
  </span>
);

/* Item codes: "|" grip, "/" separator, otherwise an icon id.
   Suffixes: "!" dimmed, "*" pressed, "+" with a live menu arrow, "-" with a dimmed one. */
const Tools = ({ items }: { items: string[] }) => (
  <>
    {items.map((code, i) => {
      if (code === '|') return <Handle key={i} first={i === 0} />;
      if (code === '/') return <Sep key={i} />;
      const name = code.replace(/[!*+-]/g, '');
      return (
        <span key={i} className="flex shrink-0 items-center">
          <button
            type="button"
            aria-label={name}
            className={`mx-px flex h-[38px] w-10 items-center justify-center rounded-[3px] border ${
              code.includes('*') ? 'border-[#b3b3b3] bg-[#dcdcdc]' : 'border-transparent'
            }`}
          >
            <Icon name={name} className={code.includes('!') ? 'size-8 opacity-30 saturate-50' : 'size-8'} />
          </button>
          {/[+-]/.test(code) && (
            <button type="button" aria-label={`${name} menu`} className="flex h-[38px] w-6 items-center justify-center">
              <Tri className={code.includes('-') ? 'opacity-50' : ''} />
            </button>
          )}
        </span>
      );
    })}
  </>
);

const Bar = ({ children, className }: { children: ReactNode; className: string }) => (
  <div className={`flex shrink-0 items-center overflow-hidden border-b border-[#b9b9b9] bg-linear-to-b from-[#fafafa] to-[#efefef] ${className}`}>{children}</div>
);

const TB1 = ['|', 'new', 'open', 'save', 'layout', 'layoutmgr', 'style', '|', 'hand*', 'panto', 'zin', 'zout', 'zfull', 'zsel', 'zlayer', 'znative', 'zlast', 'znext!', 'newmap', 'new3d', 'newbm', 'bm', 'clock', 'refresh', '|', 'select!-', 'form!-', 'desel+', 'selloc', '|', 'identify', 'abacus!', 'gear*', 'sigma', 'table!-', 'ruler+', 'tip*', 'run!-'];
const TB2 = ['|', 'ds', 'gpkg', 'shp', 'feather', 'temp', 'mesh', 'gps', '|', 'pencils!', 'pencil!', 'saveed!', 'line!-', 'pts!', 'vertex!-', 'modify!', 'del!', 'cut!', 'copy!', 'paste!', 'undo!', 'redo!', '|', 'tag!', 'diagram!', '/', 'tagpin', 'tagred', '/', 'tagpin2!', 'tageye!', 'tagmove!', 'tagrot!', 'tagedit!', '|', 'delta', 'metasearch', '|', 'python', 'plot+', 'mapadd', 'bug', 'seat', 'rotate+', 'layers', 'cube'];

const MENUS: [string, string][] = [
  ['プロジェクト', 'J'],
  ['編集', 'E'],
  ['ビュー', 'V'],
  ['レイヤ', 'L'],
  ['設定', 'S'],
  ['プラグイン', 'P'],
  ['ベクタ', 'O'],
  ['ラスタ', 'R'],
  ['データベース', 'D'],
  ['Web', 'W'],
  ['メッシュ', 'M'],
  ['プロセシング', 'C'],
  ['ヘルプ', 'H'],
];

const DockTitle = ({ title }: { title: string }) => (
  <div className="flex h-[30px] shrink-0 items-center pr-[3px] pl-1">
    <h2 className="flex-1 text-2xl leading-[30px]">{title}</h2>
    <button type="button" aria-label="フロート" className="mr-[5px]">
      <svg viewBox="0 0 11 11" className="size-[11px]" fill="none" stroke="#6a6a66">
        <rect x=".5" y=".5" width="10" height="10" rx="2" />
        <path d="M4.500 2.500h4v4h-4zM2.500 4.500h4v4h-4z" />
      </svg>
    </button>
    <button type="button" aria-label="閉じる">
      <svg viewBox="0 0 11 11" className="size-[11px]" fill="none" stroke="#6a6a66">
        <rect x=".5" y=".5" width="10" height="10" rx="2" />
        <path d="M3 3l5 5M8 3L3 8" strokeWidth="1.800" />
      </svg>
    </button>
  </div>
);

const PanelTools = ({ items }: { items: string[] }) => (
  <div className="flex h-12 shrink-0 items-center pl-[7px]">
    {items.map((code, i) => {
      if (code === '/')
        return (
          <span key={i} className="flex w-[14px] justify-center">
            <span className="h-5 w-px bg-[#cfcfcf]" />
          </span>
        );
      const name = code.replace(/[!-]/g, '');
      return (
        <React.Fragment key={i}>
          <button type="button" aria-label={name} className="flex h-8 w-[34px] items-center justify-center">
            <Icon name={name} className={code.includes('!') ? 'size-6 opacity-40' : 'size-6'} />
          </button>
          {code.includes('-') && (
            <button type="button" aria-label={`${name} menu`} className="flex w-6 justify-center">
              <Tri className="opacity-50" />
            </button>
          )}
        </React.Fragment>
      );
    })}
  </div>
);

const VScroll = ({ top, thumb, bottom }: { top: string; thumb: string; bottom: string }) => (
  <div className="flex w-[29px] shrink-0 flex-col border-l border-[#b9b9b9] bg-[#e4e4e4]">
    <button type="button" aria-label="上へ" className="flex h-7 shrink-0 items-center justify-center border-b border-[#b9b9b9] bg-[#fafafa]">
      <Tri dir="up" />
    </button>
    <div className={top} />
    <div className={`border-y border-[#b9b9b9] bg-linear-to-r from-white to-[#f0f0f0] ${thumb}`} />
    <div className={bottom} />
    <button type="button" aria-label="下へ" className="flex h-7 shrink-0 items-center justify-center border-t border-[#b9b9b9] bg-[#fafafa]">
      <Tri />
    </button>
  </div>
);

const Check = ({ id, label }: { id: string; label?: string }) => (
  <span className="relative flex size-7 shrink-0">
    <input id={id} type="checkbox" defaultChecked aria-label={label} className="peer size-7 appearance-none border border-[#b5b5b5] bg-linear-to-b from-[#f3f3f3] to-white" />
    <svg viewBox="0 0 28 28" className="pointer-events-none absolute inset-0 hidden size-7 peer-checked:block" fill="none" aria-hidden="true">
      <path d="M5.500 15l5.500 8c3-9 6-14 11-19" stroke="#000" strokeWidth="3" />
    </svg>
  </span>
);

const Spin = ({ id, label, value, className, muted = false }: { id: string; label?: string; value: string; className: string; muted?: boolean }) => (
  <span className={`flex shrink-0 rounded-[3px] border border-[#a9a9a9] ${muted ? 'bg-[#efefef] text-[#777]' : 'bg-white'} ${className}`}>
    <input id={id} aria-label={label} defaultValue={value} className="w-0 flex-1 bg-transparent pl-[5px] outline-none" />
    <span className="flex w-7 flex-col border-l border-[#b9b9b9] bg-[#fafafa]">
      <button type="button" aria-label="増やす" className="flex flex-1 items-end justify-center pb-px">
        <Tri dir="up" className={muted ? 'opacity-60' : ''} />
      </button>
      <button type="button" aria-label="減らす" className="flex flex-1 items-start justify-center pt-px">
        <Tri className={muted ? 'opacity-60' : ''} />
      </button>
    </span>
  </span>
);

const Combo = ({ id, label, value, className, muted = false }: { id: string; label?: string; value: string; className: string; muted?: boolean }) => (
  <span className={`relative flex h-[35px] shrink-0 items-center rounded-[3px] border border-[#b0b0b0] ${muted ? 'bg-[#f5f5f5] text-[#777]' : 'bg-linear-to-r from-white from-75% to-[#f3f3f3] to-75%'} ${className}`}>
    <select id={id} aria-label={label} defaultValue={value} className="w-full appearance-none bg-transparent pl-1 outline-none">
      <option>{value}</option>
    </select>
    <Tri className={`pointer-events-none absolute right-[14px] ${muted ? 'opacity-60' : ''}`} />
  </span>
);

/* ---------- elevation raster ---------- */

const GRAY: number[][] = [
  [0, 65, 85, 110, 150, 100, 115, 118, 100, 130, 190, 115, 115, 150, 120, 85],
  [0, 65, 100, 135, 110, 90, 130, 150, 145, 150, 205, 145, 150, 130, 140, 100],
  [0, 60, 115, 135, 78, 85, 125, 122, 140, 155, 180, 200, 160, 145, 150, 110],
  [0, 25, 110, 80, 50, 75, 105, 110, 118, 125, 165, 215, 195, 160, 155, 140],
  [0, 0, 60, 40, 36, 48, 62, 85, 105, 135, 175, 220, 205, 180, 155, 165],
  [0, 0, 10, 22, 24, 42, 90, 140, 165, 170, 165, 195, 220, 190, 185, 205],
  [0, 0, 0, 0, 26, 38, 52, 68, 85, 105, 130, 220, 195, 175, 210, 255],
  [0, 0, 0, 0, 28, 55, 80, 92, 120, 140, 155, 190, 180, 170, 205, 240],
  [0, 0, 0, 0, 45, 70, 100, 130, 180, 175, 150, 165, 180, 170, 205, 235],
  [0, 0, 0, 0, 25, 50, 75, 110, 190, 155, 118, 145, 140, 140, 140, 140],
  [0, 0, 0, 0, 20, 70, 95, 130, 155, 120, 92, 130, 130, 130, 130, 130],
  [0, 0, 0, 0, 10, 60, 90, 112, 130, 105, 80, 112, 115, 115, 115, 115],
];

type Pt = [number, number];
const at = ([x, y]: Pt): Pt => [(x - 17) * 0.746, (y - 42) * 0.3826];
const path = (pts: Pt[]) => {
  let d = `M${pts[0][0].toFixed(1)} ${pts[0][1].toFixed(1)}`;
  for (let i = 1; i < pts.length - 1; i++) {
    const mx = (pts[i][0] + pts[i + 1][0]) / 2;
    const my = (pts[i][1] + pts[i + 1][1]) / 2;
    d += `Q${pts[i][0].toFixed(1)} ${pts[i][1].toFixed(1)} ${mx.toFixed(1)} ${my.toFixed(1)}`;
  }
  const e = pts[pts.length - 1];
  return `${d}L${e[0].toFixed(1)} ${e[1].toFixed(1)}`;
};

const VALLEYS: Pt[][] = [
  [[355, 800], [400, 700], [430, 600], [460, 480], [500, 330], [530, 200], [500, 60]],
  [[400, 740], [520, 650], [640, 560], [760, 530], [860, 500], [960, 460], [1030, 430], [1140, 450]],
  [[400, 860], [520, 800], [640, 850], [760, 860], [900, 850], [1000, 790], [1090, 690]],
  [[450, 1190], [600, 1190], [720, 1150]],
  [[995, 1529], [1000, 1380], [1020, 1200], [1040, 1080], [1070, 990]],
  [[1540, 640], [1520, 450], [1490, 280], [1475, 150], [1480, 42]],
  [[1370, 700], [1390, 560], [1420, 430], [1450, 300], [1470, 220]],
  [[1240, 680], [1320, 590], [1380, 520]],
  [[1250, 1040], [1250, 950], [1320, 850], [1400, 780]],
  [[1250, 950], [1210, 800], [1190, 720]],
  [[1180, 240], [1150, 150], [1150, 42]],
  [[880, 250], [830, 130], [790, 42]],
  [[1200, 380], [1260, 250], [1310, 140], [1400, 50]],
  [[1350, 400], [1370, 260], [1380, 130], [1440, 50]],
  [[620, 1529], [660, 1390], [740, 1270]],
  [[690, 480], [690, 370], [740, 290]],
  [[470, 900], [640, 890], [750, 980], [820, 1060]],
  [[130, 110], [230, 90], [330, 110]],
  [[160, 150], [240, 190], [310, 260]],
  [[985, 1500], [920, 1380], [880, 1280]],
  [[930, 540], [980, 640], [1020, 690]],
  [[1190, 42], [1195, 110], [1220, 150]],
  [[1140, 940], [1170, 990], [1210, 1040]],
  [[640, 130], [625, 90], [600, 42]],
  [[1110, 42], [1105, 150], [1090, 240]],
  [[850, 620], [810, 570], [780, 540]],
  [[1270, 430], [1280, 300], [1330, 180]],
];
const RIDGES: Pt[][] = [
  [[445, 42], [450, 100], [390, 220], [340, 320], [270, 480], [295, 660]],
  [[990, 42], [1030, 130], [1010, 230], [1100, 330], [1165, 430], [1170, 560], [1180, 700], [1130, 840], [1090, 930], [950, 1010], [860, 1080], [850, 1200], [815, 1300], [830, 1450]],
  [[600, 230], [760, 220], [870, 290], [1010, 230]],
  [[600, 740], [720, 700], [850, 715], [980, 680]],
  [[1165, 300], [1230, 150], [1300, 60]],
  [[1460, 700], [1470, 560], [1450, 450]],
  [[1290, 350], [1310, 220], [1330, 150]],
  [[1330, 420], [1400, 200], [1420, 90]],
  [[1210, 700], [1260, 500], [1290, 470]],
  [[1130, 940], [1130, 1100], [1140, 1300]],
  [[690, 42], [680, 130], [700, 210]],
  [[1300, 980], [1420, 860], [1510, 820]],
];

/* Lays tributaries along a trunk, pointing upstream and alternating sides. */
const grow = (trunk: Pt[], seed: number, depth: number, reach: number): { d: string; w: number; o: number }[] => {
  let s = seed * 9301 + 49297;
  const rnd = () => ((s = (s * 1103515245 + 12345) % 2147483648) / 2147483648);
  const out: { d: string; w: number; o: number }[] = [{ d: path(trunk), w: depth === 2 ? 9 : depth === 1 ? 7 : 4, o: depth === 2 ? 0.1 : depth === 1 ? 0.085 : 0.07 }];
  if (depth === 0) return out;
  let side = 1;
  for (let i = 0; i < trunk.length - 1; i++) {
    const [ax, ay] = trunk[i];
    const [bx, by] = trunk[i + 1];
    const len = Math.hypot(bx - ax, by - ay);
    const step = depth === 2 ? 11 : 15;
    for (let t = step * rnd(); t < len; t += step * (0.7 + 0.6 * rnd())) {
      const base = Math.atan2(by - ay, bx - ax);
      const a = base + side * (0.55 + 0.35 * rnd());
      const l = reach * (0.6 + 0.7 * rnd());
      const x = ax + ((bx - ax) * t) / len;
      const y = ay + ((by - ay) * t) / len;
      const b = a + side * (0.1 + rnd() * 0.5);
      const line: Pt[] = [
        [x, y],
        [x + Math.cos(a) * l * 0.5, y + Math.sin(a) * l * 0.5],
        [x + Math.cos(a) * l * 0.5 + Math.cos(b) * l * 0.5, y + Math.sin(a) * l * 0.5 + Math.sin(b) * l * 0.5],
      ];
      out.push(...grow(line, seed * 31 + Math.floor(rnd() * 9999), depth - 1, reach * 0.4));
      side = -side;
    }
  }
  return out;
};
const STREAMS = VALLEYS.flatMap((v, i) => grow(v.map(at), i + 3, 2, i < 3 ? 78 : 42));
const SPURS = RIDGES.flatMap((v, i) => grow(v.map(at), i + 71, 1, 60));
const COAST: Pt[] = [[-60, -60], [122, -60], [124, 120], [132, 220], [135, 300], [138, 360], [147, 430], [165, 490], [180, 560], [205, 610], [235, 650], [262, 690], [300, 720], [325, 755], [350, 810], [378, 860], [400, 900], [405, 940], [430, 1030], [445, 1180], [450, 1290], [475, 1420], [505, 1600], [-60, 1600]];
const COAST_D = `M${COAST.map((p) => at(p).map((n) => n.toFixed(1)).join(' ')).join('L')}Z`;
const hex = (g: number) => `rgb(${g},${g},${g})`;

const Relief = () => (
  <svg viewBox="0 0 1136 569" className="w-[95.300%]" role="img" aria-label="出力ラスタ">
    <defs>
      <clipPath id="extentClip">
        <path d="M0 0h1136v382H853v187H285V382H0z" />
      </clipPath>
      <filter id="b26" x="-10%" y="-10%" width="120%" height="120%">
        <feGaussianBlur stdDeviation="22 19" />
      </filter>
      <filter id="b7" x="-10%" y="-10%" width="120%" height="120%">
        <feGaussianBlur stdDeviation="10" />
      </filter>
      <filter id="b3" x="-10%" y="-10%" width="120%" height="120%">
        <feGaussianBlur stdDeviation="3" />
      </filter>
      <filter id="b1">
        <feGaussianBlur stdDeviation="1.200" />
      </filter>
    </defs>
    <g clipPath="url(#extentClip)">
      <g filter="url(#b26)" className="[color-interpolation-filters:sRGB]">
        {GRAY.map((row, j) =>
          row.map((g, i) => {
            const x = i === 0 ? -80 : i * 71;
            const y = j === 0 ? -80 : j * 47.4;
            const x2 = i === 15 ? 1220 : (i + 1) * 71 + 1;
            const y2 = j === 11 ? 650 : (j + 1) * 47.4 + 1;
            return <rect key={`${i}-${j}`} x={x} y={y} width={x2 - x} height={y2 - y} fill={hex(g || (i > 0 && i < 5 ? 25 : 0))} />;
          }),
        )}
      </g>
      <g filter="url(#b7)" fill="none" strokeLinecap="round">
        {VALLEYS.map((v, i) => (
          <path key={i} d={path(v.map(at))} stroke="#000" strokeOpacity=".2" strokeWidth="18" />
        ))}
        {RIDGES.map((v, i) => (
          <path key={i} d={path(v.map(at))} stroke="#fff" strokeOpacity=".2" strokeWidth="20" />
        ))}
        <path d={path(([[1580, 780], [1520, 900], [1440, 1080]] as Pt[]).map(at))} stroke="#fff" strokeOpacity=".5" strokeWidth="34" />
      </g>
      <g filter="url(#b3)" fill="none">
        {SPURS.map((p, i) => (
          <path key={i} d={p.d} stroke="#fff" strokeOpacity={p.o * 0.8} strokeWidth={p.w} />
        ))}
        {STREAMS.map((p, i) => (
          <path key={i} d={p.d} stroke="#000" strokeOpacity={p.o} strokeWidth={p.w} />
        ))}
      </g>
      <path d={COAST_D} fill="#000" stroke="#000" strokeWidth="20" strokeOpacity=".5" filter="url(#b7)" />
      <path d={COAST_D} fill="#000" stroke="#000" strokeWidth="5" strokeOpacity=".4" filter="url(#b1)" />
    </g>
  </svg>
);

/* ---------- data ---------- */

const BROWSER: [string, string, boolean][] = [
  ['star', 'お気に入り', false],
  ['bm', '空間ブックマーク', true],
  ['home', 'ホーム', true],
  ['folder', 'C:¥', true],
  ['folder', 'X:¥ (Shared Folders)', true],
  ['folder', 'Y:¥ (Shared Folders)', true],
  ['folder', 'Z:¥ (Shared Folders)', true],
  ['koord', 'Koordinates', false],
  ['gpkg0', 'GeoPackage', true],
  ['feather0', 'SpatiaLite', false],
  ['postgres', 'PostgreSQL', false],
  ['hana', 'SAP HANA', false],
];
const MESH_TOOLS = ['TINメッシュを作成', 'グリッドメッシュを出力', 'メッシュデータをラスタライズ', 'メッシュの時系列データ値を…', 'メッシュの頂点を出力', 'メッシュの辺を出力', 'メッシュの面を出力', '線上のメッシュデータを出力', '等高線を出力'];
const GROUPS = ['プロット', 'ベクタオーバーレイ', 'ベクタジオメトリ', 'ベクタタイル', 'ベクタテーブル', 'ベクタ一般', 'ベクタ解析', 'ベクタ作成', 'ベクタ選択', 'メッシュ', 'ラスタツール', 'ラスタ解析', 'ラスタ作成', 'ラスタ地形解析', 'レイヤツール', '地図製作', '内挿'];

/* ---------- window ---------- */

export default function App() {
  return (
    <div className={`flex h-screen flex-col overflow-hidden bg-[#d2d2d2] pt-[2px] pb-px pl-px text-2xl text-black [font-feature-settings:'palt'] ${JP}`}>
      <div className="flex min-h-0 flex-1 flex-col overflow-hidden rounded-[16px] border-2 border-[#a8a8a8] bg-[#efefef]">
        <header className="flex h-14 shrink-0 items-center bg-[#f3f3f3] pl-3">
          <QLogo className="size-8" />
          <h1 className="flex-1 pl-2 text-[22px]">*無題のプロジェクト — QGIS</h1>
          {['M0 10h20', 'M3 .8h14a2.200 2.200 0 0 1 2.200 2.200v14a2.200 2.200 0 0 1-2.200 2.200H3A2.200 2.200 0 0 1 .8 17V3A2.200 2.200 0 0 1 3 .8z', 'M0 0l20 20M20 0L0 20'].map((d, i) => (
            <button key={i} type="button" aria-label={['最小化', '最大化', '閉じる'][i]} className="flex h-full w-[92px] items-center justify-center">
              <svg viewBox="0 0 20 20" className="size-5 overflow-visible" fill="none" stroke="#000" strokeWidth="1.600">
                <path d={d} />
              </svg>
            </button>
          ))}
        </header>
        <nav className="flex h-[31px] shrink-0 items-center gap-4 border-b border-[#d0d0d0] pl-4 whitespace-nowrap">
          {MENUS.map(([name, key]) => (
            <button key={key} type="button" className="leading-[30px]">
              {name}(<u className="underline-offset-4">{key}</u>)
            </button>
          ))}
        </nav>

        <Bar className="h-[55px]">
          <Tools items={TB1} />
        </Bar>
        <Bar className="h-[55px]">
          <Tools items={TB2} />
        </Bar>
        <Bar className="h-[60px]">
          <Tools items={['|', 'magnet', 'snapv!', 'snapt!*']} />
          <Spin id="tol" label="許容値" value="12" muted className="ml-px h-[43px] w-[164px]" />
          <Combo id="unit" label="単位" value="px" muted className="mx-[2px] w-[170px]" />
          <Tools items={['topo', 'self', 'cross!', 'inter!-', 'trace!', '|', '|', 'help']} />
        </Bar>

        <main className="flex min-h-0 flex-1 gap-3">
          <aside className="flex w-[359px] shrink-0 flex-col">
            <DockTitle title="ブラウザ" />
            <PanelTools items={['addl', 'refresh', 'funnel', 'treeup', 'info']} />
            <div className="flex h-[422px] shrink-0 flex-col border border-[#b0b0b0] bg-white">
              <div className="flex min-h-0 flex-1">
                <ul className={`flex-1 overflow-hidden whitespace-nowrap ${TREE}`}>
                  {BROWSER.map(([icon, label, open]) => (
                    <li key={label} className="flex h-[34px] items-center leading-[34px]">
                      <button type="button" aria-label={`${label} 展開`} disabled={!open} className="w-7 pl-[6px]">
                        {open && <Tri dir="right" />}
                      </button>
                      <Icon name={icon} />
                      <span className="pl-2">{label}</span>
                    </li>
                  ))}
                </ul>
                <VScroll top="h-0" thumb="h-[138px] border-t-0" bottom="flex-1" />
              </div>
              <div className="flex h-7 shrink-0 border-t border-[#b0b0b0] bg-[#efefef]">
                <button type="button" aria-label="左へ" className="flex w-7 items-center justify-center border-r border-[#b9b9b9] bg-[#fafafa]">
                  <Tri dir="left" />
                </button>
                <div className="flex-1 bg-linear-to-b from-white to-[#f0f0f0]" />
                <div className="w-10 border-x border-[#b9b9b9] bg-[#e4e4e4]" />
                <button type="button" aria-label="右へ" className="flex w-7 items-center justify-center bg-[#fafafa]">
                  <Tri dir="right" />
                </button>
                <div className="w-[29px] border-l border-[#b9b9b9]" />
              </div>
            </div>
            <div className="flex h-3 shrink-0 items-center justify-center">
              <span className="h-[3px] w-[18px] bg-[radial-gradient(circle,#aaa_0.8px,transparent_1px)] bg-[length:3px_3px]" />
            </div>
            <DockTitle title="レイヤ" />
            <PanelTools items={['brush', 'group', 'eyed', 'funneld', 'eps!-', 'treedn', 'treeup', 'dell']} />
            <div className={`min-h-0 flex-1 border border-[#b0b0b0] bg-white ${TREE}`}>
              {[
                ['raster', '出力ラスタ', 'underline underline-offset-4'],
                ['meshl', 'TINRelief', ''],
              ].map(([icon, label, deco], i) => (
                <div key={label} className={`flex h-[34px] items-center pl-3 ${i === 0 ? 'bg-[#efefef]' : ''}`}>
                  <Tri dir={i === 0 ? 'right' : 'down'} />
                  <span className="ml-[17px]">
                    <Check id={`layer${i}`} label={label} />
                  </span>
                  <Icon name={icon} className="ml-2 size-7" />
                  <label htmlFor={`layer${i}`} className={`flex-1 pl-2 leading-8 font-bold ${deco}`}>
                    {label}
                  </label>
                  <button type="button" aria-label="一時レイヤ" className="mr-3 flex size-7 items-center justify-center rounded-sm border border-[#e2e2e2] bg-[#f4f4f4]">
                    <Icon name="chip" className="size-6" />
                  </button>
                </div>
              ))}
              <p className="pl-[83px] leading-7">Bed Elevation</p>
              <div className={`flex gap-3 pl-[83px] text-[22px] ${JP}`}>
                <div className="h-[156px] w-[26px] bg-[linear-gradient(#f0f921,#feb72d_17%,#f2844b_31%,#d8576b_44%,#b12a90_62%,#7e03a8_74%,#46039f_90%,#0d0887)]" />
                <div className="flex flex-col justify-between leading-6">
                  <span>685.2595</span>
                  <span>−0.5165</span>
                </div>
              </div>
            </div>
          </aside>

          <section className="flex min-w-0 flex-1 items-center justify-center overflow-hidden border border-[#b9b9b9] bg-white">
            <Relief />
          </section>

          <aside className="flex w-[478px] shrink-0 flex-col">
            <DockTitle title="プロセシングツールボックス" />
            <PanelTools items={['gears', 'pythond', 'clock2', 'doc', '/', 'editp!', '/', 'wrench']} />
            <label className="flex h-[39px] shrink-0 items-center rounded-[3px] border border-[#a9a9a9] bg-white pl-[14px]">
              <Icon name="search" className="size-6" />
              <input aria-label="検索" placeholder="検索..." className="w-full pl-[11px] outline-none placeholder:text-[#808080]" />
            </label>
            <div className="flex min-h-0 flex-1 border border-t-0 border-[#b0b0b0] bg-white">
              <ul className="min-w-0 flex-1 overflow-hidden whitespace-nowrap">
                {GROUPS.map((g) => (
                  <li key={g}>
                    <div className="flex h-[34px] items-center leading-[34px]">
                      <button type="button" aria-label={`${g} 展開`} className="w-[45px] pl-3">
                        <Tri dir={g === 'メッシュ' ? 'down' : 'right'} />
                      </button>
                      <QLogo className="size-7" />
                      <span className="pl-2">{g}</span>
                    </div>
                    {g === 'メッシュ' && (
                      <ul>
                        {MESH_TOOLS.map((t, i) => (
                          <li key={t} className={`flex h-[34px] items-center pl-[84px] leading-[34px] ${i === 2 ? 'bg-[#0a7ad8] text-white' : ''}`}>
                            <Icon name={i === 2 ? 'gearsel' : 'gearw'} className="size-[30px]" />
                            <span className="pl-2">{t.endsWith('…') ? <>{t.slice(0, -1)}<span className="[font-family:'Noto_Sans_CJK_JP',sans-serif]">…</span></> : t}</span>
                          </li>
                        ))}
                      </ul>
                    )}
                  </li>
                ))}
              </ul>
              <VScroll top="flex-[106]" thumb="flex-[529]" bottom="flex-[191]" />
            </div>
          </aside>
        </main>

        <footer className="flex h-[43px] shrink-0 items-center pr-[37px] pl-1 whitespace-nowrap">
          <label className="flex h-[38px] w-[261px] items-center rounded-[3px] border border-[#a9a9a9] bg-white pl-[14px]">
            <Icon name="search" className="size-6" />
            <input aria-label="検索" placeholder="検索（Ctrl + K）" className={`w-full pl-[11px] outline-none placeholder:text-[#808080] ${TREE}`} />
          </label>
          <span className="flex-1" />
          <label htmlFor="coord">座標</label>
          <span className="ml-1 flex h-[38px] w-[276px] items-center justify-end overflow-hidden rounded-[3px] border border-[#a9a9a9] bg-white">
            <input id="coord" defaultValue="34.95273°   ,138.78732°" className="w-[300px] shrink-0 pr-5 text-right outline-none" />
          </span>
          <button type="button" aria-label="範囲" className="mx-1">
            <Icon name="extent" />
          </button>
          <label htmlFor="scale" className="pl-[10px]">
            縮尺
          </label>
          <Combo id="scale" value="1:22594" className="ml-2 w-[160px]" />
          <button type="button" aria-label="縮尺を固定" className="mx-3">
            <Icon name="lock" className="size-7" />
          </button>
          <label htmlFor="mag">拡大</label>
          <Spin id="mag" value="100%" className="ml-2 h-[38px] w-[133px]" />
          <label htmlFor="rot" className="pl-[14px]">
            回転
          </label>
          <Spin id="rot" value="0.0 °" className="mr-[7px] ml-[10px] h-[38px] w-[120px]" />
          <Check id="render" />
          <label htmlFor="render" className="pl-3">
            レンダ
          </label>
          <button type="button" className="ml-4 flex items-center gap-px">
            <Icon name="globe" className="size-7" />
            EPSG:6668
          </button>
          <button type="button" aria-label="メッセージ" className="ml-9">
            <Icon name="bubble" className="size-7" />
          </button>
        </footer>
      </div>
    </div>
  );
}
